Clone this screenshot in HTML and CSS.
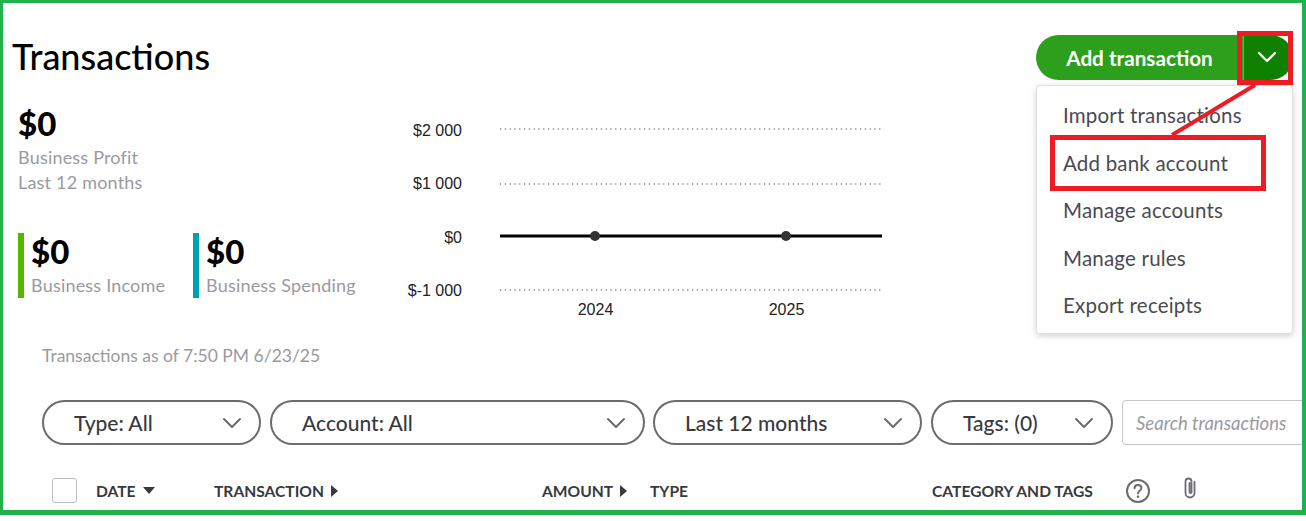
FILE: index.html
```html
<!DOCTYPE html>
<html lang="en">
<head>
<meta charset="UTF-8" />
<title>Transactions</title>
<link rel="stylesheet" href="styles.css">
</head>
<body>

<div class="frame">

  <div class="top-row">
    <h1>Transactions</h1>
    <div class="split-btn">
      <button class="split-main">Add transaction</button>
      <button class="split-arrow" aria-label="More">
        <svg width="20" height="12" viewBox="0 0 20 12"><polyline points="2,2 10,10 18,2" fill="none" stroke="#fff" stroke-width="2.4" stroke-linecap="round" stroke-linejoin="round"/></svg>
      </button>
      <ul class="menu">
        <li>Import transactions</li>
        <li>Add bank account</li>
        <li>Manage accounts</li>
        <li>Manage rules</li>
        <li>Export receipts</li>
      </ul>
    </div>
  </div>

  <div class="summary">
    <div class="stats">
      <div class="amount">$0</div>
      <div class="stat-label first">Business Profit</div>
      <div class="stat-label">Last 12 months</div>
      <div class="stat-pair">
        <div class="stat income">
          <div class="amount">$0</div>
          <div class="stat-label">Business Income</div>
        </div>
        <div class="stat spending">
          <div class="amount">$0</div>
          <div class="stat-label">Business Spending</div>
        </div>
      </div>
    </div>

    <svg class="chart" width="500" height="224" viewBox="400 104 500 224">
      <g class="axis-y">
        <text x="462" y="136">$2 000</text>
        <text x="462" y="189">$1 000</text>
        <text x="462" y="243">$0</text>
        <text x="462" y="296">$-1 000</text>
      </g>
      <g stroke="#444" stroke-width="1.2" stroke-dasharray="1.2 3.6">
        <line x1="500" y1="129" x2="882" y2="129"/>
        <line x1="500" y1="184" x2="882" y2="184"/>
        <line x1="500" y1="290" x2="882" y2="290"/>
      </g>
      <line x1="500" y1="236" x2="882" y2="236" stroke="#000" stroke-width="3"/>
      <circle cx="595" cy="236" r="5" fill="#333"/>
      <circle cx="786" cy="236" r="5" fill="#333"/>
      <g class="axis-x">
        <text x="595.500" y="315">2024</text>
        <text x="786.500" y="315">2025</text>
      </g>
    </svg>
  </div>

  <div class="as-of">Transactions as of 7:50 PM 6/23/25</div>

  <div class="filters">
    <div class="pill pill-type"><span>Type: All</span>
      <svg width="20" height="12" viewBox="0 0 20 12"><polyline points="2,2 10,10 18,2" fill="none" stroke="#6b6c72" stroke-width="2" stroke-linecap="round" stroke-linejoin="round"/></svg>
    </div>
    <div class="pill pill-account"><span>Account: All</span>
      <svg width="20" height="12" viewBox="0 0 20 12"><polyline points="2,2 10,10 18,2" fill="none" stroke="#6b6c72" stroke-width="2" stroke-linecap="round" stroke-linejoin="round"/></svg>
    </div>
    <div class="pill pill-date"><span>Last 12 months</span>
      <svg width="20" height="12" viewBox="0 0 20 12"><polyline points="2,2 10,10 18,2" fill="none" stroke="#6b6c72" stroke-width="2" stroke-linecap="round" stroke-linejoin="round"/></svg>
    </div>
    <div class="pill pill-tags"><span>Tags: (0)</span>
      <svg width="20" height="12" viewBox="0 0 20 12"><polyline points="2,2 10,10 18,2" fill="none" stroke="#6b6c72" stroke-width="2" stroke-linecap="round" stroke-linejoin="round"/></svg>
    </div>
    <div class="search">Search transactions</div>
  </div>

  <div class="table-head">
    <div class="check"></div>
    <div class="col">DATE <i class="tri-down"></i></div>
    <div class="col">TRANSACTION <i class="tri-right"></i></div>
    <div class="col">AMOUNT <i class="tri-right"></i></div>
    <div class="col">TYPE</div>
    <div class="col">CATEGORY AND TAGS</div>
    <svg class="help" width="26" height="26" viewBox="0 0 26 26">
      <circle cx="13" cy="13" r="11" fill="none" stroke="#6b6c72" stroke-width="2"/>
      <path d="M9.600 10.200c0-2 1.500-3.200 3.400-3.200s3.400 1.200 3.400 3c0 2.800-3.400 2.800-3.400 5.400" fill="none" stroke="#6b6c72" stroke-width="2" stroke-linecap="round"/>
      <circle cx="13" cy="18.800" r="1.300" fill="#6b6c72"/>
    </svg>
    <svg class="clip" width="16" height="24" viewBox="0 0 16 24">
      <path d="M12.500 6v11a4.500 4.500 0 0 1-9 0V5.500a3 3 0 0 1 6 0V16a1 1 0 0 1-2 0V7" fill="none" stroke="#6b6c72" stroke-width="1.800" stroke-linecap="round"/>
    </svg>
  </div>

  <!-- red markup drawn over the screenshot -->
  <div class="mark mark-arrow"></div>
  <div class="mark mark-item"></div>
  <svg class="mark-line" width="100" height="60" viewBox="0 0 100 60">
    <line x1="91" y1="3" x2="8" y2="53" stroke="#ed1c24" stroke-width="4"/>
  </svg>
</div>

</body>
</html>
```

FILE: styles.css
```css
* {
  box-sizing: border-box;
}
body {
  margin: 0;
  background: #fff;
  font-family: Lato, "Open Sans", sans-serif;
  color: #393a3d;
}
.frame {
  position: relative;
  height: 515px;
  border-style: solid;
  border-color: #22b14c;
  border-width: 3px 4px 5px 3px;
  padding: 32px 9px 0 9px;
  overflow: hidden;
}
.top-row {
  display: flex;
  justify-content: space-between;
  height: 45px;
}
h1 {
  margin: 0;
  font-size: 36px;
  font-weight: 500;
  line-height: 43px;
  color: #000;
}
.split-btn {
  position: relative;
  display: flex;
  width: 257px;
  height: 45px;
}
.split-btn button {
  border: none;
  font-family: inherit;
  color: #fff;
}
.split-main {
  width: 207px;
  padding: 0;
  background: #2ca01c;
  border-radius: 23px 0 0 23px;
  font-size: 20.7px;
  font-weight: 700;
}
.split-arrow {
  width: 50px;
  padding: 0 4px 0 0;
  background: #108000;
  border-left: 1px solid #62b85a !important;
  border-radius: 0 23px 23px 0;
}
.menu {
  position: absolute;
  top: 50px;
  left: 0;
  width: 257px;
  height: 249px;
  margin: 0;
  padding: 6px 0 0 26px;
  list-style: none;
  background: #fff;
  border: 1px solid #e0e1e6;
  border-radius: 4px;
  box-shadow: 0 2px 6px rgba(0,0,0,0.18);
  font-size: 20.5px;
  letter-spacing: 0.2px;
}
.menu li {
  height: 47.5px;
  line-height: 47.5px;
  color: #4a4b50;
}
.summary {
  display: flex;
  margin-top: 24px;
  height: 224px;
}
.stats {
  width: 388px;
  padding: 1px 0 0 6px;
}
.amount {
  font-size: 33px;
  font-weight: 900;
  line-height: 36px;
  color: #000;
}
.stat-label {
  font-size: 18px;
  line-height: 25px;
  letter-spacing: 0.2px;
  color: #9a9a9f;
}
.stat-label.first {
  margin-top: 4px;
}
.stat-pair {
  display: flex;
  margin-top: 38px;
}
.stat {
  width: 175px;
  height: 65px;
  padding-left: 7px;
  border-left: 6px solid;
}
.stat .stat-label {
  margin-top: 4px;
  line-height: 24px;
}
.income {
  border-left-color: #53b700;
}
.spending {
  border-left-color: #00a0b4;
}
.chart text {
  font-family: "Liberation Sans", Arial, sans-serif;
  font-size: 16px;
  fill: #222;
}
.axis-y text {
  text-anchor: end;
}
.axis-x text {
  text-anchor: middle;
}
.as-of {
  margin-top: 16px;
  padding-left: 30px;
  font-size: 17.5px;
  line-height: 24px;
  color: #9a9a9f;
}
.filters {
  display: flex;
  gap: 9px;
  height: 45px;
  margin: 32px 0 0 30px;
}
.pill {
  display: flex;
  flex: none;
  align-items: center;
  justify-content: space-between;
  padding: 0 17px 0 30px;
  border: 2px solid #6b6c72;
  border-radius: 23px;
  font-size: 21px;
  font-weight: 500;
}
.pill-type {
  width: 219px;
}
.pill-account {
  width: 375px;
}
.pill-date {
  width: 269px;
  margin-left: -1px;
}
.pill-tags {
  width: 182px;
}
.search {
  flex: none;
  width: 220px;
  padding-left: 13px;
  border: 1px solid #c4c5ca;
  border-radius: 4px;
  font-size: 18.5px;
  font-style: italic;
  line-height: 45px;
  color: #9a9a9f;
}
.table-head {
  display: flex;
  align-items: center;
  height: 25px;
  margin: 33px 0 0 40px;
  font-size: 15.6px;
  font-weight: 700;
}
.check {
  width: 25px;
  height: 25px;
  background: #fff;
  border: 1px solid #babec5;
  border-radius: 3px;
}
.col {
  display: flex;
  align-items: center;
  gap: 7px;
  white-space: nowrap;
}
.col:nth-of-type(2) {
  width: 118px;
  margin-left: 19px;
}
.col:nth-of-type(3) {
  width: 328px;
}
.col:nth-of-type(4) {
  width: 108px;
}
.col:nth-of-type(5) {
  width: 282px;
}
.col:nth-of-type(6) {
  width: 193px;
}
.tri-down {
  border-top: 7px solid #393a3d;
  border-left: 6px solid transparent;
  border-right: 6px solid transparent;
}
.tri-right {
  border-left: 7px solid #393a3d;
  border-top: 6px solid transparent;
  border-bottom: 6px solid transparent;
}
.clip {
  margin: -5px 0 0 31px;
}
.mark {
  position: absolute;
  border: 5px solid #ed1c24;
}
.mark-arrow {
  top: 28px;
  left: 1234px;
  width: 56px;
  height: 54px;
}
.mark-item {
  top: 132px;
  left: 1047px;
  width: 216px;
  height: 56px;
}
.mark-line {
  position: absolute;
  top: 79px;
  left: 1161px;
}
```
